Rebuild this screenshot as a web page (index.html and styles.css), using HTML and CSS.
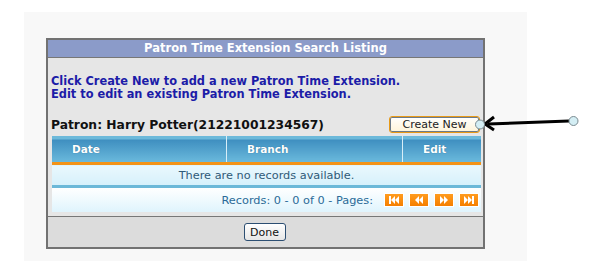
FILE: index.html
```html
<!DOCTYPE html>
<html>
<head>
<meta charset="utf-8">
<link rel="stylesheet" href="styles.css">
</head>
<body>
<div class="panel">
  <div class="dialog">
    <div class="dlg-title">Patron Time Extension Search Listing</div>
    <div class="dlg-body">
      <p class="intro">Click Create New to add a new Patron Time Extension.<br>Edit to edit an existing Patron Time Extension.</p>
      <div class="patron-row">
        <span class="patron">Patron: Harry Potter(21221001234567)</span>
        <button class="btn-create">Create New</button>
      </div>
      <table class="grid">
        <thead>
          <tr><th class="c-date">Date</th><th class="c-branch">Branch</th><th class="c-edit">Edit</th></tr>
        </thead>
        <tbody>
          <tr class="empty"><td colspan="3">There are no records available.</td></tr>
          <tr class="sep"><td colspan="3"></td></tr>
          <tr class="pager">
            <td colspan="3">
              <div class="pager-inner">
                <span class="records">Records: 0 - 0 of 0 - Pages:</span>
                <span class="pbtn"><svg width="12" height="8" viewBox="0 0 12 8"><rect x="1" y="0" width="2" height="8" fill="#fff"/><polygon points="3,4 7,0 7,8" fill="#fff"/><polygon points="7,4 11,0 11,8" fill="#fff"/></svg></span>
                <span class="pbtn"><svg width="12" height="8" viewBox="0 0 12 8"><polygon points="2,4 6,0 6,8" fill="#fff"/><polygon points="6,4 10,0 10,8" fill="#fff"/></svg></span>
                <span class="pbtn"><svg width="12" height="8" viewBox="0 0 12 8"><polygon points="2,0 6,4 2,8" fill="#fff"/><polygon points="6,0 10,4 6,8" fill="#fff"/></svg></span>
                <span class="pbtn"><svg width="12" height="8" viewBox="0 0 12 8"><polygon points="1,0 5,4 1,8" fill="#fff"/><polygon points="5,0 9,4 5,8" fill="#fff"/><rect x="9" y="0" width="2" height="8" fill="#fff"/></svg></span>
              </div>
            </td>
          </tr>
        </tbody>
      </table>
    </div>
    <div class="dlg-foot">
      <button class="btn-done">Done</button>
    </div>
  </div>
</div>
<svg class="callout" width="599" height="261" viewBox="0 0 599 261">
  <line x1="488" y1="124" x2="569" y2="121" stroke="#000" stroke-width="3"/>
  <polyline points="494,117 485,124 494,130" fill="none" stroke="#000" stroke-width="3" stroke-linejoin="miter"/>
  <circle cx="480" cy="124.5" r="4.5" fill="#d4eef4" stroke="#7a8a90" stroke-width="1"/>
  <circle cx="573.5" cy="121" r="4.5" fill="#d4eef4" stroke="#7a8a90" stroke-width="1"/>
</svg>
</body>
</html>
```

FILE: styles.css
```css
html, body {
  margin: 0;
  padding: 0;
  background: #ffffff;
}
body {
  font-family: "DejaVu Sans", Verdana, sans-serif;
  width: 599px;
  height: 261px;
  overflow: hidden;
}
.panel {
  margin: 12px 0 0 24px;
  width: 503px;
  height: 249px;
  background: #f8f8f8;
  padding: 26px 0 0 22px;
  box-sizing: border-box;
}
.dialog {
  width: 439px;
  border: 2px solid #727272;
  box-sizing: border-box;
  background: #e6e6e6;
}
.dlg-title {
  height: 17px;
  background: #8b9bc9;
  border-bottom: 1px solid #777;
  color: #fff;
  font-weight: bold;
  font-size: 11.5px;
  line-height: 17px;
  text-align: center;
}
.dlg-body {
  padding: 17px 3px 4px 3px;
}
.intro {
  margin: 0;
  color: #1c1ca8;
  font-weight: bold;
  font-size: 11.4px;
  line-height: 13px;
}
.patron-row {
  display: flex;
  justify-content: space-between;
  align-items: center;
  margin-top: 15px;
  height: 17px;
}
.patron {
  font-weight: bold;
  font-size: 12.3px;
  color: #111;
}
.btn-create {
  width: 91px;
  height: 17px;
  padding: 0;
  font-family: "DejaVu Sans", Verdana, sans-serif;
  font-size: 11px;
  color: #222;
  background: linear-gradient(#ffffff, #fff4d8);
  border: 1px solid #e89a18;
  border-radius: 3px;
  box-shadow: 0 0 0 1px #6b7a8a inset;
}
.grid {
  margin-top: 3px;
  margin-left: 1px;
  width: 429px;
  border-collapse: collapse;
  font-size: 11.3px;
}
.grid th {
  height: 26px;
  padding: 0 0 0 20px;
  text-align: left;
  color: #fff;
  font-weight: bold;
  font-size: 10.5px;
  text-shadow: 0 0 1px #2a6a90;
  background: linear-gradient(#6cb9da 0, #6cb9da 3px, #3f8fc0 4px, #6ab9dc 100%);
  border-bottom: 3px solid #f39317;
  border-left: 1px solid #d8eef8;
}
.grid th:first-child {
  border-left: none;
}
.c-date { width: 154px; }
.c-branch { width: 155px; }
.empty td {
  height: 20px;
  padding: 0;
  text-align: center;
  color: #2f5a78;
  background: linear-gradient(#eaf8fd, #d6f0fb);
  font-size: 11.3px;
}
.sep td {
  height: 3px;
  padding: 0;
  background: #6cb8d8;
}
.pager td {
  height: 24px;
  padding: 0;
  background: linear-gradient(#ffffff, #dff4fd);
}
.pager-inner {
  display: flex;
  justify-content: flex-end;
  align-items: center;
  padding-right: 2px;
}
.records {
  color: #2a6a98;
  font-size: 11.3px;
  margin-right: 6px;
}
.pbtn {
  width: 18px;
  height: 12px;
  margin-left: 5px;
  border: 1px solid #fff;
  background: linear-gradient(#ff9c1f, #f57f00);
  display: flex;
  align-items: center;
  justify-content: center;
}
.pbtn:first-of-type { margin-left: 0; }
.pbtn svg { display: block; }
.dlg-foot {
  border-top: 1px solid #777;
  background: #dcdcdc;
  height: 30px;
  display: flex;
  justify-content: center;
  align-items: center;
}
.btn-done {
  width: 42px;
  height: 18px;
  padding: 0;
  font-family: "DejaVu Sans", Verdana, sans-serif;
  font-size: 11px;
  color: #111;
  background: linear-gradient(#ffffff, #e6e6e6);
  border: 1px solid #2c4e72;
  border-radius: 3px;
  position: relative;
  left: -1px;
}
.callout {
  position: absolute;
  left: 0;
  top: 0;
  pointer-events: none;
}
```
